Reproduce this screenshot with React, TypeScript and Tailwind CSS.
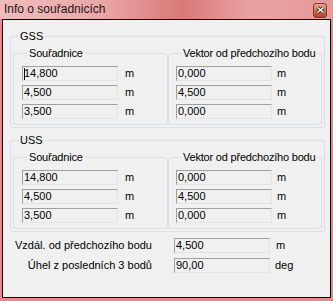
import React from "react";

function Field({ value, caret }: { value: string; caret?: boolean }) {
  return (
    <div className="flex h-[15px] w-[96px] shrink-0 items-center border border-t-[#a0a0a0] border-l-[#a0a0a0] border-r-[#e3e3e3] border-b-[#e3e3e3] bg-[#f0f0f0] pl-[1px] text-[11px] leading-none text-black">
      {caret && <span className="mr-[-1px] h-[12px] w-[1px] bg-black" />}
      {value}
    </div>
  );
}

function Row({ value, unit, gap, caret }: { value: string; unit: string; gap: string; caret?: boolean }) {
  return (
    <div className="flex items-center">
      <Field value={value} caret={caret} />
      <span className={`${gap} text-[11px] leading-none`}>{unit}</span>
    </div>
  );
}

function SubGroup({ title, values, pad, gap, caret }: { title: string; values: string[]; pad: string; gap: string; caret?: boolean }) {
  return (
    <fieldset className={`min-w-0 flex-1 rounded-[3px] border border-[#d5dfe5] ${pad} pb-[5px]`}>
      <legend className="ml-[5px] whitespace-nowrap px-[2px] text-[11px] leading-[13px] tracking-[-0.2px]">{title}</legend>
      <div className="mt-[6px] flex flex-col gap-[4px]">
        {values.map((v, i) => (
          <Row key={i} value={v} unit="m" gap={gap} caret={caret && i === 0} />
        ))}
      </div>
    </fieldset>
  );
}

function Group({ title, coords, vector, caret }: { title: string; coords: string[]; vector: string[]; caret?: boolean }) {
  return (
    <fieldset className="ml-[7px] mr-[5px] min-w-0 rounded-[3px] border border-[#d5dfe5] px-[2px] pb-[2px]">
      <legend className="ml-[5px] whitespace-nowrap px-[2px] text-[11px] leading-[13px]">{title}</legend>
      <div className="mt-[4px] flex">
        <SubGroup title="Souřadnice" values={coords} pad="pl-[8px]" gap="ml-[7px]" caret={caret} />
        <SubGroup title="Vektor od předchozího bodu" values={vector} pad="pl-[7px]" gap="ml-[5px]" />
      </div>
    </fieldset>
  );
}

export default function App() {
  return (
    <div className="flex h-[301px] w-[333px] flex-col bg-[#e68a8a] font-['Liberation_Sans',Arial,sans-serif] text-black">
      {/* title bar */}
      <div className="flex h-[19px] shrink-0 items-center justify-between bg-[linear-gradient(90deg,#f0bcbc_0%,#eaa8a8_30%,#d97878_55%,#e9a2a2_75%,#e69a9a_100%)] pl-[4px] pr-[6px]">
        <span className="text-[12px] leading-[19px] text-[#1c1420]">Info o souřadnicích</span>
        <div className="mt-[1px] flex h-[15px] w-[14px] items-center justify-center rounded-[3px] border border-[#7d3b2e] bg-[linear-gradient(180deg,#eba58f_0%,#d66e4f_50%,#b9401f_100%)]">
          <svg width="9" height="8" viewBox="0 0 9 8">
            <path d="M1.5 1.5 L7.5 6.5 M7.5 1.5 L1.5 6.5" stroke="#4a2a26" strokeWidth="3.2" />
            <path d="M1.5 1.5 L7.5 6.5 M7.5 1.5 L1.5 6.5" stroke="#ffffff" strokeWidth="1.6" />
          </svg>
        </div>
      </div>

      {/* client area */}
      <div className="mx-[2px] h-[279px] border border-black bg-[#f0f0f0]">
        <div className="mt-[10px]">
          <Group title="GSS" coords={["14,800", "4,500", "3,500"]} vector={["0,000", "4,500", "0,000"]} caret />
        </div>
        <div className="mt-[6px]">
          <Group title="USS" coords={["14,800", "4,500", "3,500"]} vector={["0,000", "4,500", "0,000"]} />
        </div>

        <div className="mt-[6px] flex flex-col gap-[5px]">
          <div className="flex items-center">
            <span className="w-[149px] text-right text-[11px] leading-none">Vzdál. od předchozího bodu</span>
            <div className="ml-[22px]">
              <Field value="4,500" />
            </div>
            <span className="ml-[6px] text-[11px] leading-none">m</span>
          </div>
          <div className="flex items-center">
            <span className="w-[149px] text-right text-[11px] leading-none">Úhel z posledních 3 bodů</span>
            <div className="ml-[22px]">
              <Field value="90,00" />
            </div>
            <span className="ml-[5px] text-[11px] leading-none">deg</span>
          </div>
        </div>
      </div>
    </div>
  );
}
